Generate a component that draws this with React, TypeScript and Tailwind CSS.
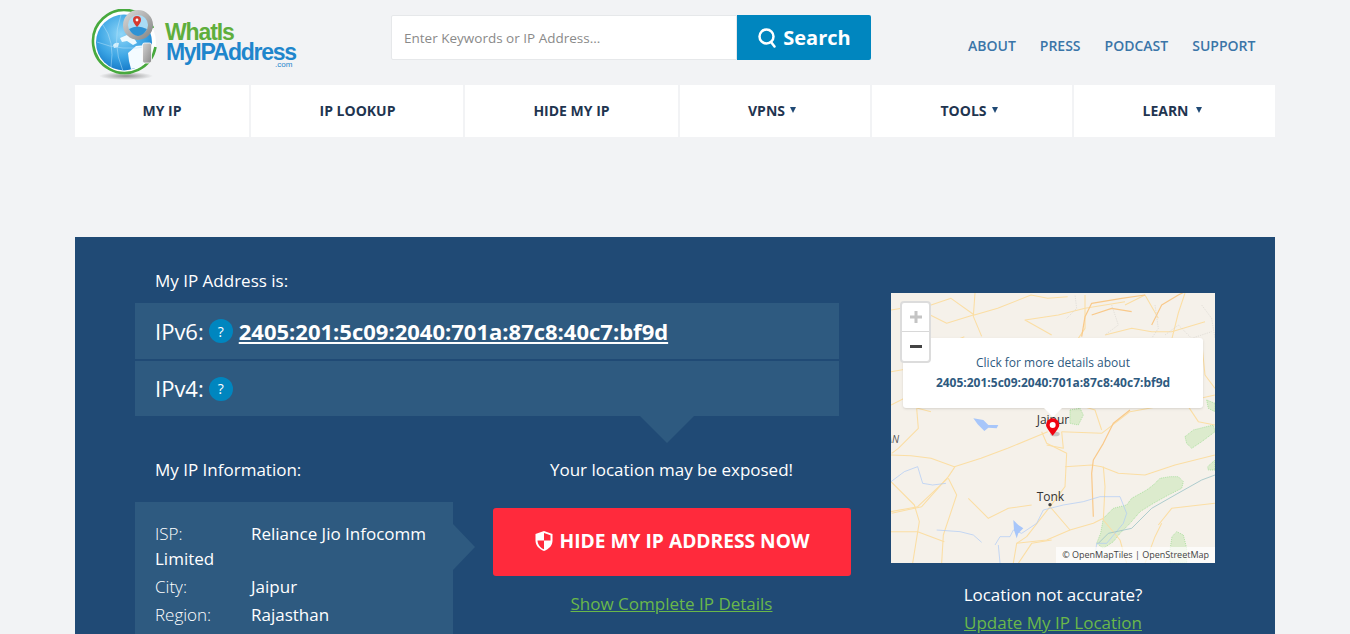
import React from "react";

const F = { fontFamily: '"Open Sans", sans-serif' };

function Logo() {
  return (
    <div className="relative w-[207px] h-[72px] ml-[16px] mt-[9px] shrink-0">
      <svg width="80" height="72" viewBox="0 0 80 72" className="absolute left-0 top-0">
        <defs>
          <radialGradient id="g" cx="45%" cy="35%" r="70%">
            <stop offset="0" stopColor="#8fd6f8" />
            <stop offset="0.6" stopColor="#3aa4e4" />
            <stop offset="1" stopColor="#1174c4" />
          </radialGradient>
          <radialGradient id="sh" cx="50%" cy="50%" r="50%">
            <stop offset="0" stopColor="#8f8f8f" />
            <stop offset="1" stopColor="#f2f3f5" />
          </radialGradient>
          <linearGradient id="m" x1="0" y1="0" x2="1" y2="1">
            <stop offset="0" stopColor="#d4d4d4" />
            <stop offset="1" stopColor="#8a8a8a" />
          </linearGradient>
        </defs>
        <ellipse cx="35" cy="67" rx="27" ry="4" fill="url(#sh)" />
        <circle cx="33" cy="33.500" r="32" fill="#fff" />
        <path d="M62 19 A31.500 31.500 0 1 0 64.500 38" fill="none" stroke="#48a93e" strokeWidth="2.600" />
        <circle cx="33" cy="33.500" r="28" fill="url(#g)" />
        <path d="M29 29 l7 -3 7 3 3 5 -4 2 -6 -4 -5 1 Z" fill="#eefaff" />
        <path d="M37 44 l8 -7 10 -1 0 12 -5 10 -10 2 -2 -8 Z" fill="#f4fbff" />
        <path d="M22 36 q2 -3 6 -2 l-1 4 -4 1 Z" fill="#d8f1fc" />
        <path d="M12 16 q12 16 8 42 M30 6 q-10 28 2 56 M6 33 q25 10 54 4" fill="none" stroke="#b8e2f8" strokeWidth="0.5" />
        <circle cx="47" cy="16" r="12.500" fill="#a9dcf6" stroke="url(#m)" strokeWidth="5" />
        <path d="M38 20 q8 -5 18 0 q-3 6 -9 7 q-6 -1 -9 -7 Z" fill="#2f92d4" />
        <path d="M46 7 a4 4 0 0 1 4 4 q0 2.500 -4 7 q-4 -4.500 -4 -7 a4 4 0 0 1 4 -4 Z" fill="#d6392f" />
        <circle cx="46" cy="11" r="1.400" fill="#fff" />
        <rect x="51.500" y="34" width="9" height="20" rx="2" fill="url(#m)" stroke="#fff" strokeWidth="0.8" />
      </svg>
      <div
        className="absolute left-[74px] top-[15px] text-[23px] leading-[17px] font-bold tracking-[-1.1px] text-[#5fae3c]"
        style={{ fontFamily: '"Liberation Sans", sans-serif' }}
      >
        WhatIs
      </div>
      <div
        className="absolute left-[75px] top-[35px] text-[23px] leading-[17px] font-bold tracking-[-1.3px] text-[#1f86cc]"
        style={{ fontFamily: '"Liberation Sans", sans-serif' }}
      >
        MyIPAddress
      </div>
      <div
        className="absolute left-[184px] top-[52px] text-[8px] leading-[7px] text-[#1f86cc]"
        style={{ fontFamily: '"Liberation Sans", sans-serif' }}
      >
        .com
      </div>
    </div>
  );
}

function Caret() {
  return (
    <svg width="6" height="6" viewBox="0 0 6 6" className="inline-block">
      <path d="M0 0h6L3 6Z" fill="#204a75" />
    </svg>
  );
}

function Question() {
  return (
    <span className="w-6 h-6 rounded-full bg-[#0086bf] text-white text-[14px] flex items-center justify-center">
      ?
    </span>
  );
}

function MapArt() {
  const road = "#fbdea4";
  const big = "#f9c98a";
  const grey = "#d6d3cc";
  return (
    <svg viewBox="18 24 972 810" className="absolute inset-0 w-full h-full">
      <rect x="18" y="24" width="972" height="810" fill="#f5f1ea" />
      <g fill="#dcebcd" stroke="#a3dd98" strokeWidth="2.500" strokeDasharray="3 3">
        <path d="M635 775 l12 -30 8 -45 30 -30 40 -10 15 -20 45 -25 20 -15 20 -20 30 -5 25 0 15 15 -5 20 -40 20 -45 25 -40 25 -30 35 -30 30 -20 25 -30 20 Z" />
        <path d="M855 795 l6 -40 14 -15 20 10 10 40 0 44 -50 0 Z" />
        <path d="M900 455 l25 -20 60 -15 5 20 -40 30 -30 20 -15 -15 Z" />
        <path d="M555 375 l30 -5 10 20 -15 30 -25 -5 Z" />
        <path d="M965 345 l25 10 0 25 -20 -10 Z" />
        <path d="M968 545 l22 -20 0 30 -20 0 Z" />
      </g>
      <g fill="none" stroke={road} strokeWidth="3.200" strokeLinejoin="round">
        <path d="M18 510 l60 2 60 8 70 25 80 -25 80 -30 120 -50" />
        <path d="M18 75 l60 -10 60 -5 60 -20 70 50 70 -20 100 -40 50 10 60 -5" />
        <path d="M270 24 l-5 70 25 60" />
        <path d="M18 260 l60 -10 40 -40 60 -30 60 -25" />
        <path d="M265 90 l-80 25 -60 -30 -50 10" />
        <path d="M500 150 l-80 -45 100 -15 80 -20 120 -20" />
        <path d="M600 30 l0 100 -20 30" />
        <path d="M95 370 l5 60 -60 60 -20 15" />
        <path d="M210 545 l-20 30 -80 90 -90 20" />
        <path d="M18 590 l70 70 15 50 -20 124" />
        <path d="M190 580 l25 50 -40 120 -5 84" />
        <path d="M470 440 l15 35 60 30 -5 100 -45 60 -70 90 -30 20" />
        <path d="M530 440 l5 50 -50 -10" />
        <path d="M530 440 l120 5 85 -65 165 -30 90 -20" />
        <path d="M540 545 l80 -5 30 5 50 20 80 5 90 -30 120 -30" />
        <path d="M495 665 l60 70 70 -20 30 -15" />
        <path d="M555 735 l-70 30 -90 10 -10 59" />
        <path d="M655 545 l5 60 -5 100 50 60 20 70" />
        <path d="M820 720 l40 -50 130 -15" />
        <path d="M18 740 l80 0 80 30" />
        <path d="M18 680 l80 -15 90 -85" />
        <path d="M400 835 l40 -60 60 -10" />
        <path d="M650 435 l-20 -60 -50 -15" />
        <path d="M900 350 l40 60 50 10" />
        <path d="M660 150 l80 -20 60 10 60 0 100 -30" />
        <path d="M900 24 l-20 60 -20 80" />
        <path d="M720 60 l60 -30 40 70" />
        <path d="M950 170 l10 100 30 40" />
        <path d="M18 360 l40 -20 40 30 40 10" />
        <path d="M780 835 l30 -80 20 -40" />
        <path d="M250 640 l60 60 60 -30 70 -10" />
      </g>
      <g fill="none" stroke={big} strokeWidth="3.600" strokeLinejoin="round">
        <path d="M735 375 l-50 40 -30 60 -30 50 -5 40 5 130" />
        <path d="M590 155 l10 -60 20 -40 90 -15 70 -10" />
        <path d="M800 120 l30 -60 50 -30 20 -10" />
        <path d="M620 90 l60 -20 60 10" />
      </g>
      <g fill="none" stroke={grey} strokeWidth="1.800" strokeDasharray="4 3">
        <path d="M545 100 l30 -30 -5 -40" />
        <path d="M680 60 l20 60 -40 30" />
        <path d="M840 150 l40 -30 40 40 60 -20" />
        <path d="M810 60 l10 70 -20 30" />
        <path d="M950 60 l30 40 10 60" />
      </g>
      <g fill="none" stroke="#aac8f8" strokeWidth="2">
        <path d="M18 590 l40 -30 40 -15 15 50 30 5 40 -5" />
        <path d="M155 735 l70 5 40 10 25 22" />
        <path d="M330 780 l15 -25 30 0 10 -20 25 10 45 -30 20 -40 60 -15 60 -10 50 -15 60 0 20 50 -10 30 -50 60 -30 0 -5 40" />
        <path d="M340 780 l5 54" />
      </g>
      <path d="M640 775 l30 -30 70 -15 60 -60 70 -40 80 -45 40 -15" fill="none" stroke="#9fc4c8" strokeWidth="2.500" />
      <g fill="#a7c6fa">
        <path d="M265 400 l30 5 15 15 30 0 -5 10 -25 -2 -12 10 -20 -20 Z" />
        <path d="M385 705 l15 15 15 10 -15 15 -5 15 -8 -25 Z" />
      </g>
      <g fontFamily="Open Sans, sans-serif" fill="#333">
        <text x="455" y="417" fontSize="36">Jaipur</text>
        <text x="455" y="648" fontSize="36">Tonk</text>
        <text x="4" y="474" fontSize="30" fontStyle="italic" fill="#555">AN</text>
      </g>
      <circle cx="495" cy="659" r="5" fill="#444" />
      <ellipse cx="510" cy="447" rx="14" ry="7" fill="#999" opacity="0.5" />
      <path d="M503 400 a20 20 0 0 1 20 20 q0 8 -20 32 q-20 -24 -20 -32 a20 20 0 0 1 20 -20 Z" fill="#f0030f" />
      <circle cx="503" cy="420" r="9" fill="#fff" />
    </svg>
  );
}

export default function App() {
  const nav = [
    ["MY IP", "w-[174px] pb-[2px]", ""],
    ["IP LOOKUP", "w-[212px] pb-[2px] pl-[1px]", ""],
    ["HIDE MY IP", "w-[213px] pb-[2px]", ""],
    ["VPNS", "w-[190px] pb-[2px] pr-[6px] gap-[5px]", "c"],
    ["TOOLS", "w-[200px] pb-[2px] pr-[6px] gap-[5px]", "c"],
    ["LEARN", "w-[201px] pb-[2px] pr-[5px] gap-[7px]", "c"],
  ] as const;
  return (
    <div className="h-[634px] w-full overflow-hidden bg-[#f2f3f5]" style={F}>
      <div className="w-[1200px] mx-auto">
        <header className="h-[85px] flex items-start">
          <Logo />
          <div className="flex ml-[93px] mt-[15px]">
            <div className="w-[346px] h-[45px] bg-white border border-[#e6e8ea] rounded-l-[2px] pl-3 pt-[1px] flex items-center text-[13.5px] text-[#8a8a8a]">
              Enter Keywords or IP Address...
            </div>
            <div className="w-[134px] h-[45px] bg-[#0086bf] rounded-r-[2px] pl-[1px] flex items-center justify-center gap-[7px] text-white text-[20px] font-bold">
              <svg width="18" height="20" viewBox="0 0 18 20" fill="none" stroke="#fff" strokeWidth="2.500">
                <circle cx="8.500" cy="8.500" r="7" />
                <path d="M13 14l3.500 4.500" strokeLinecap="round" />
              </svg>
              Search
            </div>
          </div>
          <nav className="ml-[97px] mt-[36px] flex gap-6 text-[14px] font-semibold text-[#3a75a8] leading-[19px]">
            <span>ABOUT</span>
            <span>PRESS</span>
            <span>PODCAST</span>
            <span>SUPPORT</span>
          </nav>
        </header>

        <div className="flex gap-[2px] h-[52px]">
          {nav.map(([label, w, caret]) => (
            <div
              key={label}
              className={`${w} bg-white flex items-center justify-center text-[14px] font-bold text-[#1f3550]`}
            >
              {label}
              {caret && <Caret />}
            </div>
          ))}
        </div>

        <main className="mt-[100px] bg-[#204a75] h-[500px] pl-[60px] pr-[60px] pt-[32px] flex text-white">
          <div className="w-[704px] shrink-0">
            <p className="pl-5 text-[17px] leading-[24px] mb-[10px]">My IP Address is:</p>
            <div className="h-[56px] bg-[#2e5a80] pl-5 flex items-center gap-[5px] text-[22px] mb-[2px]">
              IPv6:
              <Question />
              <a className="ml-[1px] font-bold underline text-[22px]">2405:201:5c09:2040:701a:87c8:40c7:bf9d</a>
            </div>
            <div className="relative h-[55px] bg-[#2e5a80] pl-5 flex items-center gap-[5px] text-[22px]">
              IPv4:
              <Question />
              <span className="absolute left-[505px] top-full w-0 h-0 border-l-[27px] border-r-[27px] border-t-[27px] border-l-transparent border-r-transparent border-t-[#2e5a80]" />
            </div>
            <div className="flex mt-[42px]">
              <div className="w-[318px] shrink-0">
                <p className="pl-5 text-[17px] leading-[24px] mb-[20px]">My IP Information:</p>
                <div className="relative bg-[#2e5a80] h-[200px] pl-5 pr-5 pt-[19px] text-[17px] leading-[25px]">
                  <span className="absolute left-full top-[22px] w-0 h-0 border-t-[23px] border-b-[23px] border-l-[22px] border-t-transparent border-b-transparent border-l-[#2e5a80]" />
                  <p className="mb-[3px]">
                    <span className="inline-block w-[96px] font-light">ISP:</span>
                    Reliance Jio Infocomm Limited
                  </p>
                  <p className="mb-[3px]">
                    <span className="inline-block w-[96px] font-light">City:</span>
                    Jaipur
                  </p>
                  <p>
                    <span className="inline-block w-[96px] font-light">Region:</span>
                    Rajasthan
                  </p>
                </div>
              </div>
              <div className="w-[358px] shrink-0 ml-[40px] text-center">
                <p className="pr-[1px] text-[17px] leading-[24px] mb-[26px]">Your location may be exposed!</p>
                <div className="h-[68px] bg-[#ff2a3c] rounded-[3px] pb-[2px] flex items-center justify-center gap-[7px] text-[19.2px] font-bold">
                  <svg width="18" height="22" viewBox="0 0 18 21">
                    <path d="M9 .5l8.500 3v6.500c0 5-3.500 8.500-8.500 10.500C4 18.500.5 15 .5 10V3.500Z" fill="#fff" />
                    <path d="M9 2.500l6.500 2.200V10H9ZM9 10v8.800c-3.500-1.500-6.300-4.500-6.500-8.800Z" fill="#ff2a3c" />
                  </svg>
                  HIDE MY IP ADDRESS NOW
                </div>
                <a className="block mt-[16px] pr-[1px] text-[17px] leading-[24px] underline text-[#6ab84a]">Show Complete IP Details</a>
              </div>
            </div>
          </div>
          <div className="w-[324px] ml-[52px] mt-[24px] shrink-0 text-center">
            <div className="relative w-[324px] h-[270px] overflow-hidden">
              <MapArt />
              <div className="absolute left-[12px] top-[45px] w-[300px] h-[70px] bg-white rounded-[3px] shadow-sm pt-[16px] text-[#2e5a80]">
                <p className="text-[12px] leading-[17px]">Click for more details about</p>
                <p className="text-[12px] leading-[17px] mt-[3px] font-bold">2405:201:5c09:2040:701a:87c8:40c7:bf9d</p>
                <span className="absolute left-[141px] top-full w-0 h-0 border-l-[9px] border-r-[9px] border-t-[9px] border-l-transparent border-r-transparent border-t-white" />
              </div>
              <div className="absolute left-[9px] top-[8px] w-[31px] h-[62px] bg-white rounded-[4px] border-2 border-[#dcdcdc] flex flex-col">
                <div className="h-[29px] flex items-center justify-center text-[#c4c4c4] border-b border-[#d8d8d8]">
                  <svg width="12" height="12" viewBox="0 0 12 12"><path d="M0 6h12M6 0v12" stroke="currentColor" strokeWidth="3" /></svg>
                </div>
                <div className="flex-1 flex items-center justify-center text-[#444]">
                  <svg width="12" height="3" viewBox="0 0 12 3"><path d="M0 1.500h12" stroke="currentColor" strokeWidth="3" /></svg>
                </div>
              </div>
              <div className="absolute right-0 bottom-0 h-[16px] px-[6px] bg-white/70 text-[9px] leading-[16px] text-[#444] whitespace-nowrap">
                © OpenMapTiles | OpenStreetMap
              </div>
            </div>
            <p className="mt-[20px] text-[17px] leading-[24px]">Location not accurate?</p>
            <a className="block mt-[4px] text-[17px] leading-[24px] underline text-[#6ab84a]">Update My IP Location</a>
          </div>
        </main>
      </div>
    </div>
  );
}
